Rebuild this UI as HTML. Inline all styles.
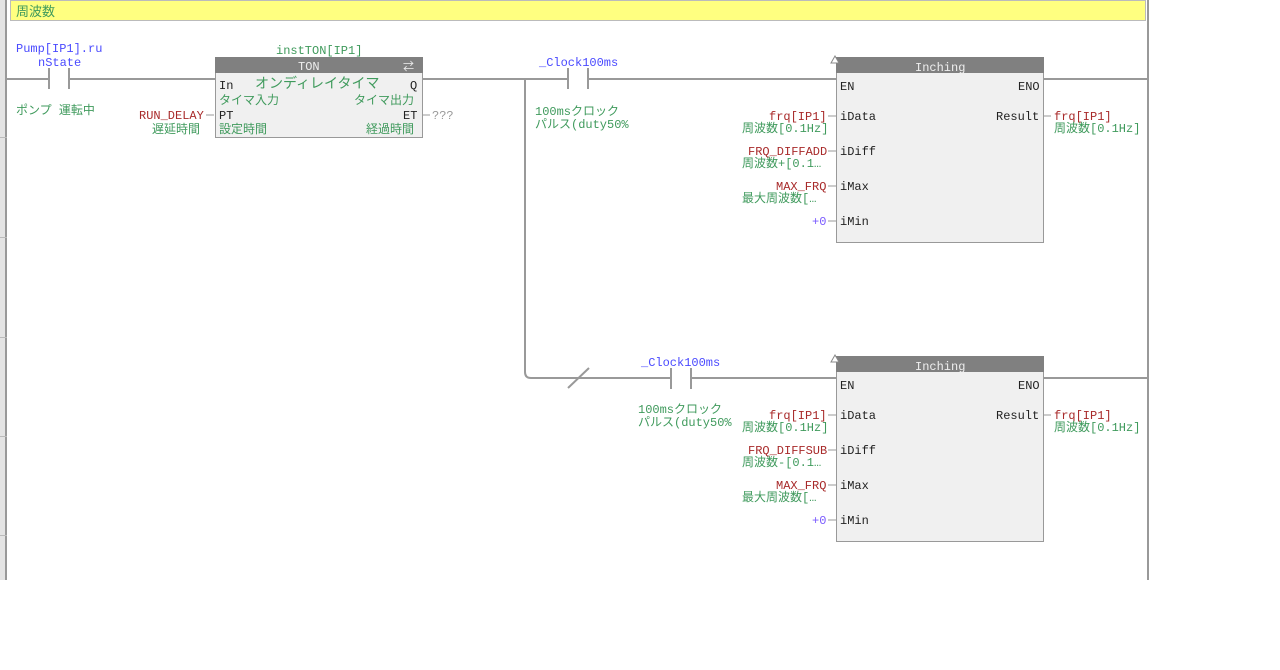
<!DOCTYPE html>
<html><head><meta charset="utf-8"><style>
html,body{margin:0;padding:0;background:#fff;width:1280px;height:670px;overflow:hidden}
svg text{font-family:"Liberation Mono","Noto Sans CJK JP",monospace;font-size:12px}
.b{fill:#4a4aff}.g{fill:#3f9a5c}.r{fill:#a82a2a}.k{fill:#222}.w{fill:#eee}.gr{fill:#999}
</style></head><body>
<svg width="1280" height="670" viewBox="0 0 1280 670" xmlns="http://www.w3.org/2000/svg">
<rect x="0" y="0" width="5" height="580" fill="#e4e4e4"/>
<rect x="5" y="0" width="2" height="580" fill="#999"/>
<g stroke="#bbb" stroke-width="1">
<line x1="0" y1="137.5" x2="7" y2="137.5"/><line x1="0" y1="237.5" x2="7" y2="237.5"/>
<line x1="0" y1="337.5" x2="7" y2="337.5"/><line x1="0" y1="436.5" x2="7" y2="436.5"/><line x1="0" y1="535.5" x2="7" y2="535.5"/>
</g>
<rect x="1147" y="0" width="2" height="580" fill="#999"/>
<rect x="10.5" y="0.5" width="1135" height="20" fill="#ffff80" stroke="#bbb"/>
<text x="16" y="16" class="g" style="font-size:13px">周波数</text>
<g stroke="#999" stroke-width="2" fill="none">
<line x1="7" y1="79" x2="215" y2="79"/>
<line x1="422" y1="79" x2="836" y2="79"/>
<line x1="1044" y1="79" x2="1148" y2="79"/>
<path d="M525 79 V372 Q525 378 531 378 H836"/>
<line x1="1044" y1="378" x2="1148" y2="378"/>
<line x1="49" y1="68" x2="49" y2="89"/><line x1="69" y1="68" x2="69" y2="89"/>
<line x1="568" y1="68" x2="568" y2="89"/><line x1="588" y1="68" x2="588" y2="89"/>
<line x1="671" y1="368" x2="671" y2="389"/><line x1="691" y1="368" x2="691" y2="389"/>
<line x1="568" y1="388" x2="589" y2="368"/>
</g>
<rect x="60" y="70" width="8" height="18" fill="#fff"/>
<rect x="50" y="70" width="18" height="18" fill="#fff"/>
<rect x="569" y="70" width="18" height="18" fill="#fff"/>
<rect x="672" y="370" width="18" height="18" fill="#fff"/>
<text x="16" y="52" class="b">Pump[IP1].ru</text><text x="38" y="66" class="b">nState</text>
<text x="16" y="114" class="g">ポンプ 運転中</text>
<text x="276" y="54" class="g">instTON[IP1]</text>
<rect x="215.5" y="57.5" width="207" height="80" fill="#f0f0f0" stroke="#999"/>
<rect x="215" y="57" width="208" height="16" fill="#808080"/>
<text x="298" y="70" class="w">TON</text>
<text x="403" y="70" class="w" style="font-size:11px">⇄</text>
<text x="219" y="89" class="k">In</text><text x="255" y="88" class="g" style="font-size:14px">オンディレイタイマ</text><text x="410" y="89" class="k">Q</text>
<text x="219" y="104" class="g">タイマ入力</text><text x="354" y="104" class="g">タイマ出力</text>
<text x="219" y="119" class="k">PT</text><text x="403" y="119" class="k">ET</text>
<text x="219" y="133" class="g">設定時間</text><text x="366" y="133" class="g">経過時間</text>
<text x="139" y="119" class="r">RUN_DELAY</text><text x="152" y="133" class="g">遅延時間</text>
<text x="432" y="119" class="gr">???</text>
<g stroke="#999"><line x1="206" y1="115" x2="214" y2="115"/><line x1="423" y1="115" x2="430" y2="115"/></g>
<text x="539" y="66" class="b">_Clock100ms</text>
<text x="535" y="115" class="g">100msクロック</text><text x="535" y="128" class="g">パルス(duty50%</text>
<text x="641" y="366" class="b">_Clock100ms</text>
<text x="638" y="413" class="g">100msクロック</text><text x="638" y="426" class="g">パルス(duty50%</text>
<g id="inch">
<rect x="836.5" y="57.5" width="207" height="185" fill="#f0f0f0" stroke="#999"/>
<rect x="836" y="57" width="208" height="16" fill="#808080"/>
<path d="M831 63 L835 56 L839 63 Z" fill="#fff" stroke="#888"/>
<text x="915" y="71" class="w">Inching</text>
<text x="840" y="90" class="k">EN</text><text x="1018" y="90" class="k">ENO</text>
<text x="840" y="120" class="k">iData</text><text x="996" y="120" class="k">Result</text>
<text x="840" y="155" class="k">iDiff</text>
<text x="840" y="190" class="k">iMax</text>
<text x="840" y="225" class="k">iMin</text>
<g stroke="#999"><line x1="828" y1="116" x2="836" y2="116"/><line x1="828" y1="151" x2="836" y2="151"/><line x1="828" y1="186" x2="836" y2="186"/><line x1="828" y1="221" x2="836" y2="221"/><line x1="1044" y1="116" x2="1051" y2="116"/></g>
<text x="769" y="120" class="r">frq[IP1]</text><text x="742" y="132" class="g">周波数[0.1Hz]</text>
<text x="1054" y="120" class="r">frq[IP1]</text><text x="1054" y="132" class="g">周波数[0.1Hz]</text>
<text x="812" y="225" fill="#7a5aff">+0</text>
</g>
<text x="748" y="155" class="r">FRQ_DIFFADD</text><text x="742" y="167" class="g">周波数+[0.1…</text>
<text x="776" y="190" class="r">MAX_FRQ</text><text x="742" y="202" class="g">最大周波数[…</text>
<use href="#inch" y="299"/>
<text x="748" y="454" class="r">FRQ_DIFFSUB</text><text x="742" y="466" class="g">周波数-[0.1…</text>
<text x="776" y="489" class="r">MAX_FRQ</text><text x="742" y="501" class="g">最大周波数[…</text>
</svg>
</body></html>
